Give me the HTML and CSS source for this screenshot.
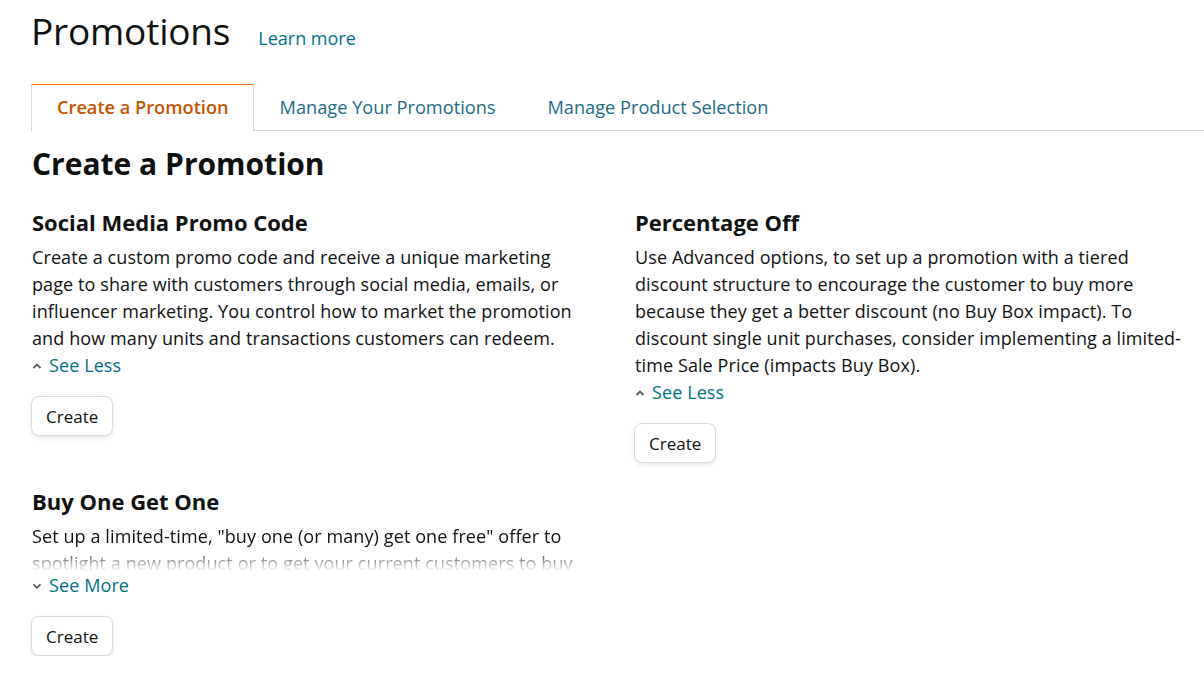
FILE: index.html
```html
<!DOCTYPE html>
<html lang="en">
<head>
<meta charset="utf-8">
<title>Promotions</title>
<link rel="stylesheet" href="styles.css">
</head>
<body>
<div class="page">
  <header class="page-header">
    <h1 class="page-title">Promotions</h1>
    <a class="link learn-more" href="#">Learn more</a>
  </header>

  <nav class="tabs">
    <a class="tab tab-active" href="#">Create a Promotion</a>
    <a class="tab" href="#">Manage Your Promotions</a>
    <a class="tab" href="#">Manage Product Selection</a>
  </nav>

  <main class="content">
    <h2 class="section-title">Create a Promotion</h2>
    <div class="cards">
      <section class="card">
        <h3 class="card-title">Social Media Promo Code</h3>
        <p class="card-text">Create a custom promo code and receive a unique marketing page to share with customers through social media, emails, or influencer marketing. You control how to market the promotion and how many units and transactions customers can redeem.</p>
        <a class="toggle" href="#"><svg class="caret" viewBox="0 0 10 6" width="10" height="6"><path d="M1.5 5 L5 1.6 L8.5 5" /></svg>See Less</a>
        <button class="btn">Create</button>
      </section>

      <section class="card">
        <h3 class="card-title">Percentage Off</h3>
        <p class="card-text">Use Advanced options, to set up a promotion with a tiered discount structure to encourage the customer to buy more because they get a better discount (no Buy Box impact). To discount single unit purchases, consider implementing a limited-time Sale Price (impacts Buy Box).</p>
        <a class="toggle" href="#"><svg class="caret" viewBox="0 0 10 6" width="10" height="6"><path d="M1.5 5 L5 1.6 L8.5 5" /></svg>See Less</a>
        <button class="btn">Create</button>
      </section>

      <section class="card">
        <h3 class="card-title">Buy One Get One</h3>
        <p class="card-text card-text-clamped">Set up a limited-time, "buy one (or many) get one free" offer to spotlight a new product or to get your current customers to buy more of your products by offering a free product with their purchase.</p>
        <a class="toggle" href="#"><svg class="caret" viewBox="0 0 10 6" width="10" height="6"><path d="M1.5 1.4 L5 4.8 L8.5 1.4" /></svg>See More</a>
        <button class="btn">Create</button>
      </section>
    </div>
  </main>
</div>
</body>
</html>
```

FILE: styles.css
```css
* {
  box-sizing: border-box;
}

html, body {
  margin: 0;
  padding: 0;
  background: #ffffff;
}

body {
  font-family: "Open Sans", "Noto Sans", "Liberation Sans", sans-serif;
  color: #0f1111;
  font-size: 18px;
  line-height: 27px;
  letter-spacing: 0.1px;
}

.page {
  padding-left: 31px;
}

.page-header {
  display: flex;
  align-items: baseline;
  padding-top: 7px;
  height: 84px;
}

.page-title {
  margin: 0;
  font-size: 37px;
  font-weight: 400;
  line-height: 48px;
  letter-spacing: -0.2px;
}

.link {
  color: #007185;
  text-decoration: none;
}

.learn-more {
  margin-left: 28px;
  font-size: 18px;
  letter-spacing: 0;
}

.tabs {
  display: flex;
  border-bottom: 1px solid #d5d9d9;
  height: 47px;
}

.tab {
  display: flex;
  align-items: center;
  padding: 0 25px 1px;
  height: 47px;
  font-size: 18.2px;
  letter-spacing: 0;
  color: #1d6b85;
  text-decoration: none;
  border: 1px solid transparent;
  border-bottom: none;
}

.tab-active {
  border-color: #d5d9d9;
  border-top-color: #e3742f;
  background: #ffffff;
  color: #c45500;
  font-weight: 600;
  margin-bottom: -1px;
  height: 47px;
  padding-right: 24px;
}

.content {
  padding-top: 14px;
  padding-right: 14px;
  padding-left: 1px;
}

.section-title {
  margin: 0;
  font-size: 30px;
  font-weight: 700;
  line-height: 38px;
  letter-spacing: 0;
}

.cards {
  display: grid;
  grid-template-columns: 555px 555px;
  column-gap: 48px;
  row-gap: 24px;
  padding-top: 25px;
  align-items: start;
}

.card {
  display: flex;
  flex-direction: column;
  align-items: flex-start;
}

.card-title {
  margin: 0;
  font-size: 22px;
  font-weight: 700;
  line-height: 28px;
  padding-bottom: 8px;
  letter-spacing: 0;
}

.card-text {
  margin: 0;
}

.card-text-clamped {
  max-height: 49px;
  overflow: hidden;
  -webkit-mask-image: linear-gradient(to bottom, #000 50%, rgba(0,0,0,0.25) 85%, transparent 100%);
  mask-image: linear-gradient(to bottom, #000 50%, rgba(0,0,0,0.25) 85%, transparent 100%);
}

.toggle {
  display: inline-flex;
  align-items: center;
  color: #007185;
  text-decoration: none;
}

.caret {
  fill: none;
  stroke: #565959;
  stroke-width: 1.8;
  margin-right: 7px;
  margin-left: 0;
}

.btn {
  margin-top: 17px;
  font-family: inherit;
  font-size: 17px;
  color: #0f1111;
  background: #ffffff;
  border: 1px solid #d5d9d9;
  border-radius: 8px;
  box-shadow: 0 2px 5px 0 rgba(213, 217, 217, 0.6);
  height: 40px;
  padding: 0 14px;
  margin-left: -1px;
}
```
